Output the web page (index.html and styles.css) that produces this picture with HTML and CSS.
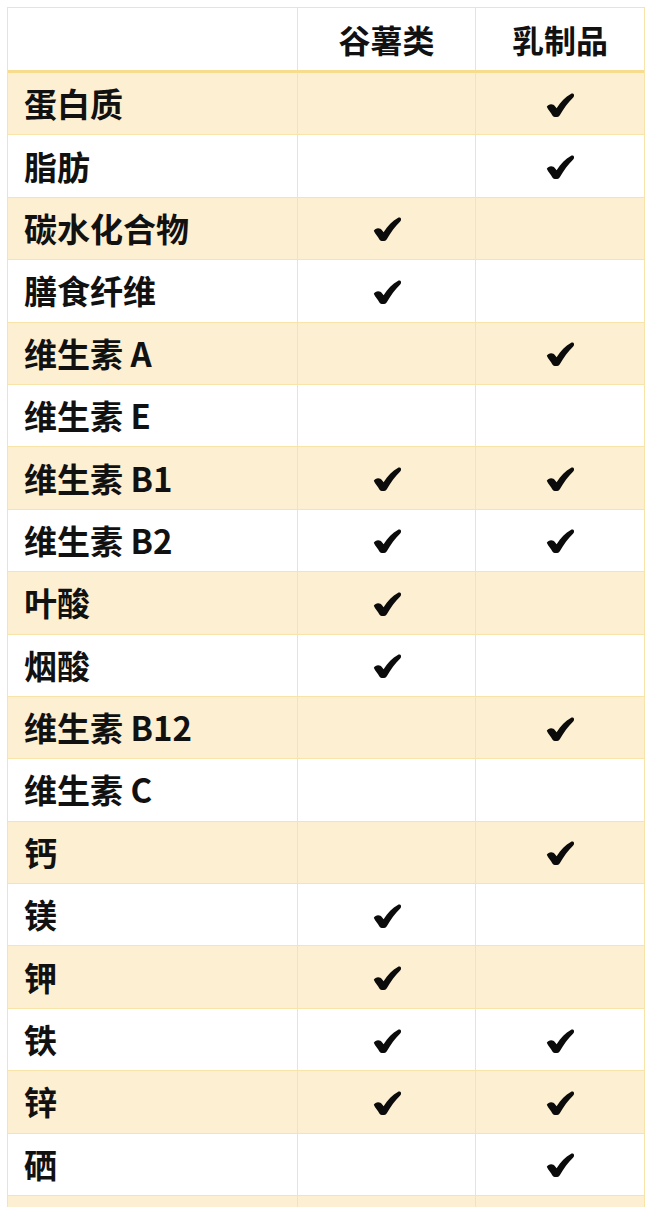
FILE: index.html
```html
<!DOCTYPE html>
<html lang="zh">
<head>
<meta charset="utf-8">
<link rel="stylesheet" href="styles.css">
</head>
<body>
<svg width="0" height="0" class="defs">
  <defs>
    <symbol id="chk" viewBox="0 0 28 24">
      <path d="M0.8,13.8 C2.5,10.6 7.2,10.4 9.2,13.4 L10.6,15.2 C14.6,8.8 19.6,3.6 24.8,0.9 C27.6,-0.4 29.2,2.4 27.2,4.4 C22,9.6 17.6,15.6 13.8,22.2 C12.2,24.8 7.8,24.8 6.4,22.4 C4.8,19.6 2.4,17.2 0.8,13.8 Z" fill="#0b0b0b"/>
    </symbol>
  </defs>
</svg>
<div class="table">
  <div class="row head">
    <div class="cell name"></div>
    <div class="cell mid">谷薯类</div>
    <div class="cell mid">乳制品</div>
  </div>
  <div class="row odd"><div class="cell name">蛋白质</div><div class="cell mid"></div><div class="cell mid"><svg class="ck"><use href="#chk"/></svg></div></div>
  <div class="row"><div class="cell name">脂肪</div><div class="cell mid"></div><div class="cell mid"><svg class="ck"><use href="#chk"/></svg></div></div>
  <div class="row odd"><div class="cell name">碳水化合物</div><div class="cell mid"><svg class="ck"><use href="#chk"/></svg></div><div class="cell mid"></div></div>
  <div class="row"><div class="cell name">膳食纤维</div><div class="cell mid"><svg class="ck"><use href="#chk"/></svg></div><div class="cell mid"></div></div>
  <div class="row odd"><div class="cell name">维生素 A</div><div class="cell mid"></div><div class="cell mid"><svg class="ck"><use href="#chk"/></svg></div></div>
  <div class="row"><div class="cell name">维生素 E</div><div class="cell mid"></div><div class="cell mid"></div></div>
  <div class="row odd"><div class="cell name">维生素 B1</div><div class="cell mid"><svg class="ck"><use href="#chk"/></svg></div><div class="cell mid"><svg class="ck"><use href="#chk"/></svg></div></div>
  <div class="row"><div class="cell name">维生素 B2</div><div class="cell mid"><svg class="ck"><use href="#chk"/></svg></div><div class="cell mid"><svg class="ck"><use href="#chk"/></svg></div></div>
  <div class="row odd"><div class="cell name">叶酸</div><div class="cell mid"><svg class="ck"><use href="#chk"/></svg></div><div class="cell mid"></div></div>
  <div class="row"><div class="cell name">烟酸</div><div class="cell mid"><svg class="ck"><use href="#chk"/></svg></div><div class="cell mid"></div></div>
  <div class="row odd"><div class="cell name">维生素 B12</div><div class="cell mid"></div><div class="cell mid"><svg class="ck"><use href="#chk"/></svg></div></div>
  <div class="row"><div class="cell name">维生素 C</div><div class="cell mid"></div><div class="cell mid"></div></div>
  <div class="row odd"><div class="cell name">钙</div><div class="cell mid"></div><div class="cell mid"><svg class="ck"><use href="#chk"/></svg></div></div>
  <div class="row"><div class="cell name">镁</div><div class="cell mid"><svg class="ck"><use href="#chk"/></svg></div><div class="cell mid"></div></div>
  <div class="row odd"><div class="cell name">钾</div><div class="cell mid"><svg class="ck"><use href="#chk"/></svg></div><div class="cell mid"></div></div>
  <div class="row"><div class="cell name">铁</div><div class="cell mid"><svg class="ck"><use href="#chk"/></svg></div><div class="cell mid"><svg class="ck"><use href="#chk"/></svg></div></div>
  <div class="row odd"><div class="cell name">锌</div><div class="cell mid"><svg class="ck"><use href="#chk"/></svg></div><div class="cell mid"><svg class="ck"><use href="#chk"/></svg></div></div>
  <div class="row"><div class="cell name">硒</div><div class="cell mid"></div><div class="cell mid"><svg class="ck"><use href="#chk"/></svg></div></div>
  <div class="row odd"><div class="cell name"></div><div class="cell mid"></div><div class="cell mid"></div></div>
</div>
</body>
</html>
```

FILE: styles.css
```css
html, body {
  margin: 0;
  padding: 0;
  background: #ffffff;
}
body {
  font-family: "Noto Sans CJK SC", "Noto Sans", sans-serif;
  color: #111111;
  overflow: hidden;
  height: 1207px;
}
.defs {
  position: absolute;
  width: 0;
  height: 0;
}
.table {
  margin: 7px 0 0 7px;
  width: 638px;
  border-top: 1px solid #f8e4a8;
  border-left: 1px solid #f8e4a8;
  border-right: 1px solid #f8e4a8;
  box-sizing: border-box;
}
.row {
  display: grid;
  grid-template-columns: 289px 177px 168px;
  column-gap: 1px;
  background: #f8e4a8;
  height: 62.4px;
  box-sizing: border-box;
  border-bottom: 1px solid #f8e4a8;
}
.row.head {
  height: 65px;
  border-bottom: 3px solid #f6dc8c;
}
.cell {
  background: #ffffff;
  display: flex;
  align-items: center;
  font-size: 33px;
  font-weight: 700;
  line-height: 1;
}
.row.head .cell {
  font-size: 32px;
}
.row.odd .cell {
  background: #fdefd1;
}
.cell.name {
  padding-left: 16px;
}
.cell.mid {
  justify-content: center;
}
.ck {
  width: 28px;
  height: 24px;
  margin-top: 2px;
}
```
